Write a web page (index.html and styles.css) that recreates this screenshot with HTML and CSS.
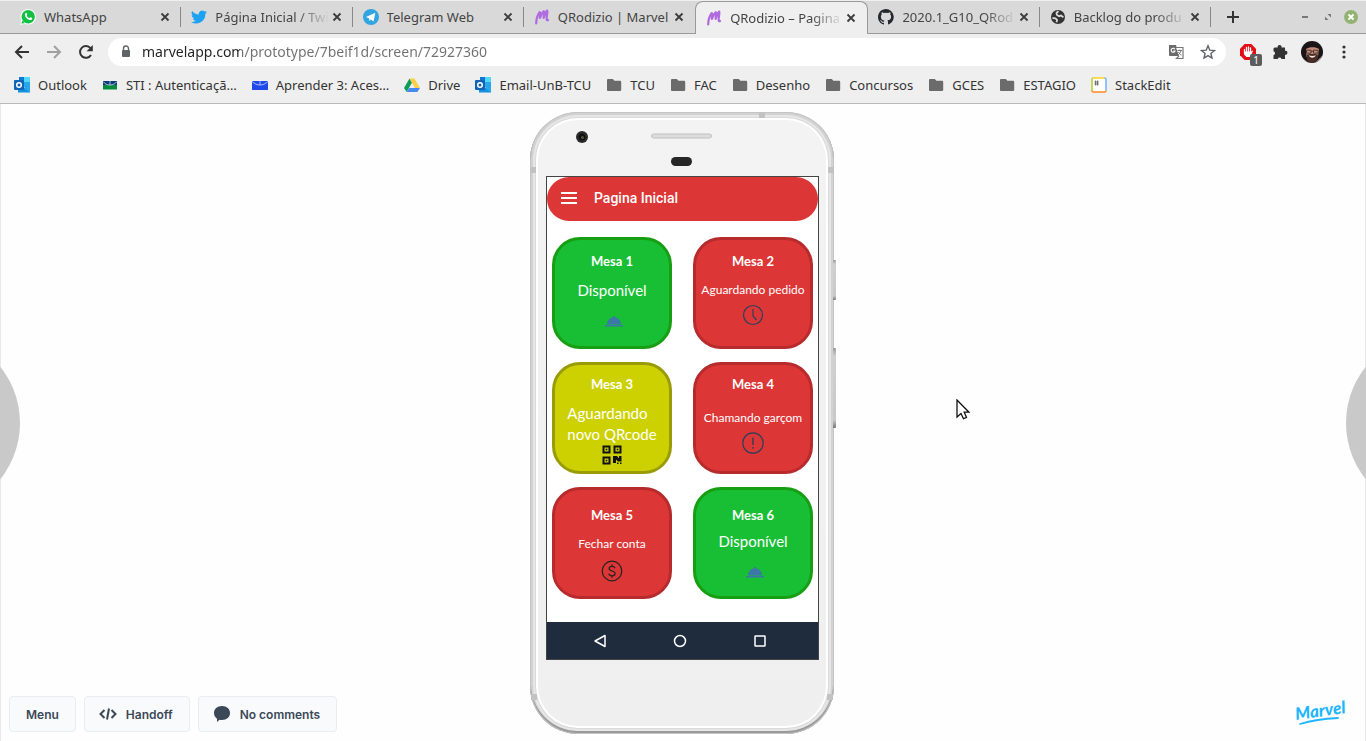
FILE: index.html
```html
<!DOCTYPE html>
<html lang="pt-BR">
<head>
<meta charset="utf-8">
<title>QRodizio – Pagina Inicial</title>
<link rel="stylesheet" href="styles.css">
</head>
<body>
<svg class="defs" aria-hidden="true">
  <symbol id="close" viewBox="0 0 16 16"><path d="M4.500 4.500l7 7M11.500 4.500l-7 7" stroke="#3c3c3c" stroke-width="1.800" fill="none"/></symbol>
  <symbol id="folder" viewBox="0 0 16 16"><path d="M2.200 2h4.600l1.600 1.800h5.400c.8 0 1.400.5 1.400 1.300v7.600c0 .8-.6 1.300-1.400 1.300H2.200c-.8 0-1.200-.5-1.200-1.300V3.300C1 2.500 1.500 2 2.200 2z" fill="#6b6b6b"/></symbol>
  <symbol id="marvel" viewBox="0 0 16 16"><path d="M2.200 14.500C2.200 10 3.500 6 5.500 3.300c1-.6.8 2.200.3 5.700C7 6 8.200 3.600 9.600 2.400c1-.3.4 3.200 0 6.400 1.200-3.200 2.200-5.800 3.600-7.300.8.400-.6 5.500-.6 8.500 0 1 .5 1.500 1.400 1" fill="none" stroke="#b06be0" stroke-width="2.200" stroke-linecap="round" stroke-linejoin="round"/></symbol>
  <symbol id="outlook" viewBox="0 0 16 16"><path d="M5 0h11v10H5z" fill="#28a8ea"/><path d="M5 0h5v5H5z" fill="#0f78d4"/><path d="M10 0h6v5h-6z" fill="#50d9ff"/><path d="M4 8l6 3 6-4v8.500H4z" fill="#1490df"/><path d="M10 11l6-4v8.500z" fill="#28a8ea"/><rect y="3" width="10" height="10" rx="1" fill="#0f64b5"/><circle cx="5" cy="8" r="2.300" fill="none" stroke="#fff" stroke-width="1.500"/></symbol>
  <symbol id="dish" viewBox="0 0 20 12"><path d="M3 9.500a7 7 0 0 1 6.200-7.200V1h1.600v1.300A7 7 0 0 1 17 9.500zM1 10h18v1.400H1z" fill="#3b78a8"/></symbol>
</svg>

<header class="chrome">
  <div class="tabstrip">
    <nav class="tabs" aria-label="Abas">
      <div class="tab">
        <svg class="icon" viewBox="0 0 16 16"><circle cx="8.200" cy="7.800" r="7.800" fill="#fff"/><path d="M.2 16l1.200-4.500 3.400 3.300z" fill="#fff"/><circle cx="8.200" cy="7.800" r="6.700" fill="#12c143"/><path d="M1.500 14.800l.8-3.300 2.400 2.400z" fill="#12c143"/><path d="M5.500 4.200c.5-.6 1-.4 1.200.1l.5 1.200c.1.400-.5.900-.5 1.200.7 1.300 1.600 2 2.700 2.400.4 0 .8-1 1.200-.9l1.400.7c.5.300.1 1.500-.5 1.900-1 .7-2.700.2-4.300-1C5.400 8.400 4.200 5.700 5.500 4.200z" fill="#fff"/></svg>
        <a class="tab-title" href="#">WhatsApp</a>
        <button class="close" aria-label="Fechar WhatsApp"><svg class="icon"><use href="#close"/></svg></button>
      </div>
      <div class="tab">
        <svg class="icon" viewBox="0 0 24 24"><path d="M24 4.600a10 10 0 0 1-2.800.8 5 5 0 0 0 2.100-2.700 10 10 0 0 1-3.100 1.200 4.900 4.900 0 0 0-8.400 4.500A14 14 0 0 1 1.700 3.100a4.900 4.900 0 0 0 1.500 6.600 5 5 0 0 1-2.200-.6 4.900 4.900 0 0 0 3.900 4.900 5 5 0 0 1-2.200.1 4.900 4.900 0 0 0 4.600 3.400A10 10 0 0 1 0 19.500a14 14 0 0 0 21.500-12.400A10 10 0 0 0 24 4.600z" fill="#1da1f2"/></svg>
        <a class="tab-title long" href="#">Página Inicial / Twi</a>
        <button class="close" aria-label="Fechar Twitter"><svg class="icon"><use href="#close"/></svg></button>
      </div>
      <div class="tab">
        <svg class="icon" viewBox="0 0 16 16"><circle cx="8" cy="8" r="8" fill="#31a5e0"/><path d="M3 8l9.300-4.200-1.800 8.800-2.600-2-1.400 1.500-.4-2.500z" fill="#fff"/></svg>
        <a class="tab-title" href="#">Telegram Web</a>
        <button class="close" aria-label="Fechar Telegram"><svg class="icon"><use href="#close"/></svg></button>
      </div>
      <div class="tab">
        <svg class="icon"><use href="#marvel"/></svg>
        <a class="tab-title" href="#">QRodizio | Marvel</a>
        <button class="close" aria-label="Fechar Marvel"><svg class="icon"><use href="#close"/></svg></button>
      </div>
      <div class="tab active">
        <svg class="icon"><use href="#marvel"/></svg>
        <a class="tab-title long" href="#">QRodizio – Pagina</a>
        <button class="close" aria-label="Fechar QRodizio"><svg class="icon"><use href="#close"/></svg></button>
      </div>
      <div class="tab">
        <svg class="icon" viewBox="0 0 16 16"><path fill="#24292e" d="M8 0C3.600 0 0 3.600 0 8c0 3.500 2.300 6.500 5.500 7.600.4.100.5-.2.500-.4v-1.400c-2.200.5-2.700-1-2.700-1-.4-.9-.9-1.200-.9-1.200-.7-.5.100-.5.100-.5.800.1 1.200.8 1.200.8.700 1.300 1.900.9 2.300.7.100-.5.300-.9.500-1.100-1.800-.2-3.600-.9-3.600-4 0-.9.300-1.600.8-2.100-.1-.2-.4-1 .1-2.100 0 0 .7-.2 2.200.8a7.700 7.700 0 0 1 4 0c1.500-1 2.200-.8 2.200-.8.400 1.100.2 1.900.1 2.100.5.600.8 1.300.8 2.100 0 3.100-1.900 3.700-3.700 3.900.3.300.6.800.6 1.500v2.200c0 .2.100.5.500.4A8 8 0 0 0 8 0z"/></svg>
        <a class="tab-title long" href="#">2020.1_G10_QRod</a>
        <button class="close" aria-label="Fechar GitHub"><svg class="icon"><use href="#close"/></svg></button>
      </div>
      <div class="tab">
        <svg class="icon" viewBox="0 0 16 16"><circle cx="8" cy="8" r="7" fill="#333"/><path d="M8.500 2.200l-2 1.600.3 2L9 7.200l2-.6 2.400 1.600M2.500 9l3 .3 1.600 1.700-.6 2.300" fill="none" stroke="#d9d9d9" stroke-width="1.800"/></svg>
        <a class="tab-title long" href="#">Backlog do produ</a>
        <button class="close" aria-label="Fechar Backlog"><svg class="icon"><use href="#close"/></svg></button>
      </div>
    </nav>
    <button class="new-tab" aria-label="Nova aba"><svg class="icon" viewBox="0 0 16 16"><path d="M8 2v12M2 8h12" stroke="#333" stroke-width="2"/></svg></button>
    <div class="window-buttons">
      <button aria-label="Minimizar"><svg class="icon" viewBox="0 0 16 16"><path d="M5 8h6" stroke="#777" stroke-width="2"/></svg></button>
      <button aria-label="Restaurar"><svg class="icon" viewBox="0 0 16 16"><path d="M7.500 5H11v3.500zM5 7.500V11h3.500z" fill="#777"/></svg></button>
      <button aria-label="Fechar janela"><svg class="icon" viewBox="0 0 16 16"><circle cx="8" cy="8" r="7" fill="#92b372"/><path d="M5.500 5.500l5 5M10.500 5.500l-5 5" stroke="#fff" stroke-width="2"/></svg></button>
    </div>
  </div>

  <div class="toolbar">
    <div class="nav-buttons">
      <button aria-label="Voltar"><svg class="icon" viewBox="0 0 16 16"><path d="M15 8H2M8 2L2 8l6 6" fill="none" stroke="#333" stroke-width="2"/></svg></button>
      <button aria-label="Avançar"><svg class="icon" viewBox="0 0 16 16"><path d="M1 8h13M8 2l6 6-6 6" fill="none" stroke="#a0a0a0" stroke-width="2"/></svg></button>
      <button aria-label="Recarregar"><svg class="icon" viewBox="0 0 16 16"><path d="M13 11A5.900 5.900 0 1 1 12.500 4.200" fill="none" stroke="#333" stroke-width="2"/><path d="M14.800 1v6.200H8.600z" fill="#333"/></svg></button>
    </div>
    <div class="omnibox">
      <svg class="icon" viewBox="0 0 16 16"><path d="M5.500 7V4.500a2.500 2.500 0 0 1 5 0V7" fill="none" stroke="#5f6368" stroke-width="1.400"/><rect x="4" y="6" width="8" height="7" rx="1" fill="#5f6368"/></svg>
      <input class="url" type="text" aria-label="Endereço" value="marvelapp.com/prototype/7beif1d/screen/72927360">
      <button aria-label="Traduzir"><svg class="icon" viewBox="0 0 16 16"><path d="M1 1h7l3 11H2a1 1 0 0 1-1-1z" fill="#6b6b6b"/><path d="M8 3.500h7v11H8.500l2.500-2.500" fill="#fff" stroke="#777" stroke-width="1.200"/><path d="M6.800 5.200A2 2 0 1 0 7 7H5.200" fill="none" stroke="#fff" stroke-width="1.100"/><path d="M9.500 6.500h4.500M11.700 5.500v1M13 6.500c-.4 2-1.600 3.500-3 4.300M10.500 8c.7 1.500 1.800 2.500 3 3" fill="none" stroke="#777"/></svg></button>
      <button aria-label="Favoritar"><svg class="icon" viewBox="0 0 16 16"><path d="M8 1.800l1.800 4.400 4.700.3-3.600 3 1.100 4.600L8 11.600l-4 2.500 1.100-4.600-3.600-3 4.700-.3z" fill="none" stroke="#5f6368" stroke-width="1.400"/></svg></button>
    </div>
    <div class="extensions">
      <button class="adblock" aria-label="Bloqueador"><svg class="icon" viewBox="0 0 16 16"><path d="M4.700 0h6.600L16 4.700v6.600L11.300 16H4.700L0 11.300V4.700z" fill="#e40d14"/><path d="M4.500 9V5.500M6.500 8V3.500M8.500 8V3M10.500 8V4" stroke="#fff" stroke-width="1.300" stroke-linecap="round"/><path d="M4 7.500h7.200l1.300-1 .5.600-2 4.400-1.500 1.500H6.500L4 10.500z" fill="#fff"/></svg><span class="badge">1</span></button>
      <button aria-label="Extensões"><svg class="icon" viewBox="0 0 16 16"><path d="M2.500 3.500h3.200a2 2 0 1 1 3.800 0H13v3.300a2 2 0 1 1 0 3.900V15H9.500a2 2 0 0 0-3.800 0H1.500v-3.800a2 2 0 0 0 0-3.900V4.500z" fill="#333"/></svg></button>
      <button class="profile" aria-label="Perfil"><svg class="avatar" viewBox="0 0 22 22"><clipPath id="face"><circle cx="11" cy="11" r="11"/></clipPath><g clip-path="url(#face)"><path d="M0 0h22v22H0z" fill="#1a1617"/><path d="M5 8c3-2.500 10-2.500 13 0l-1 7.500-3.500 5h-5l-3-5z" fill="#c08a74"/><path d="M5.500 14l3-1h6l3 1-2 6-4.500 2-4.500-2z" fill="#4a2d27"/><path d="M7.800 14.300c2 .8 5 .8 7 0-1 3.200-6 3.200-7 0z" fill="#f2e4df"/><path d="M5.500 9.200H10v3H5.500zM12.500 9.200H17v3h-4.500zM10 10.200h2.500" fill="none" stroke="#3a2a2a" stroke-width=".8"/><path d="M0 16l8 6H0z" fill="#96787a"/><path d="M22 14v8h-8z" fill="#b9a9a5"/></g></svg></button>
      <button aria-label="Menu do navegador"><svg class="icon" viewBox="0 0 16 16"><circle cx="8" cy="3" r="1.600" fill="#333"/><circle cx="8" cy="8" r="1.600" fill="#333"/><circle cx="8" cy="13" r="1.600" fill="#333"/></svg></button>
    </div>
  </div>

  <nav class="bookmarks" aria-label="Favoritos">
    <a href="#"><svg class="icon"><use href="#outlook"/></svg>Outlook</a>
    <a href="#"><svg class="icon" viewBox="0 0 16 16"><path d="M1 4h14v4H1z" fill="#0c3c7c"/><path d="M1 8h14v4.500H1z" fill="#068c3f"/><path d="M1 4.500C3 7 5 8 8 8s5-1 7-3.500M8 4v4" fill="none" stroke="#e8f0f0" stroke-width=".7"/></svg>STI : Autenticaçã…</a>
    <a href="#"><svg class="icon" viewBox="0 0 16 16"><path d="M0 4h16v9H0z" fill="#2148e8"/><path d="M0 4.500C3 7 5 8 8 8s5-1 8-3.500M8 4v4" fill="none" stroke="#dfe6ff" stroke-width=".7"/></svg>Aprender 3: Aces…</a>
    <a href="#"><svg class="icon" viewBox="0 0 16 16"><path d="M5.500 1.500L0 11l2.700 4L8 5.500z" fill="#0f9d58"/><path d="M5.500 1.500h5L16 11h-5z" fill="#ffcf48"/><path d="M5.300 11H16l-2.700 4H2.700z" fill="#4688f4"/></svg>Drive</a>
    <a href="#"><svg class="icon"><use href="#outlook"/></svg>Email-UnB-TCU</a>
    <a href="#"><svg class="icon"><use href="#folder"/></svg>TCU</a>
    <a href="#"><svg class="icon"><use href="#folder"/></svg>FAC</a>
    <a href="#"><svg class="icon"><use href="#folder"/></svg>Desenho</a>
    <a href="#"><svg class="icon"><use href="#folder"/></svg>Concursos</a>
    <a href="#"><svg class="icon"><use href="#folder"/></svg>GCES</a>
    <a href="#"><svg class="icon"><use href="#folder"/></svg>ESTAGIO</a>
    <a href="#"><svg class="icon" viewBox="0 0 16 16"><rect x="1" y="1" width="14" height="14" rx="2" fill="#fff"/><path d="M1 14V2.500Q1 1 2.500 1" fill="none" stroke="#b5d030" stroke-width="1.500"/><path d="M2.500 1H14" stroke="#ffd21a" stroke-width="1.500"/><path d="M13.500 1Q15 1 15 2.500V13.500" fill="none" stroke="#6cb2ff" stroke-width="1.500"/><path d="M1 13.500Q1 15 2.500 15h11q1.500 0 1.500-1.500" fill="none" stroke="#ff8a1e" stroke-width="1.500"/><path d="M4.600 3.500v5M6.600 3.500v5M3.500 5h4.300M3.500 7h4.300" stroke="#555" stroke-width=".8"/></svg>StackEdit</a>
  </nav>
</header>

<main class="stage">
  <button class="side-nav prev" aria-label="Tela anterior"></button>
  <button class="side-nav next" aria-label="Próxima tela"></button>

  <div class="actions">
    <button class="action">Menu</button>
    <button class="action"><svg class="action-icon" viewBox="0 0 18 16"><path d="M5.500 4L1.500 8l4 4M12.500 4l4 4-4 4M10 2.500L8 13.500" fill="none" stroke="#3c4858" stroke-width="2"/></svg>Handoff</button>
    <button class="action"><svg class="action-icon" viewBox="0 0 18 16"><path d="M9 0c4.800 0 8 3 8 7s-3.200 7-8 7c-.9 0-1.700-.1-2.500-.3L4 16v-3.300C2.200 11.400 1 9.400 1 7c0-4 3.200-7 8-7z" fill="#3c4858"/></svg>No comments</button>
  </div>

  <div class="device">
    <div class="phone">
      <svg class="sensors" viewBox="0 0 272 56"><circle cx="36" cy="17" r="6" fill="#2b2b2b"/><circle cx="36" cy="17" r="3.500" fill="#111"/><circle cx="36.500" cy="17.500" r="1.500" fill="#55573c"/><rect x="105.500" y="14" width="60" height="4" rx="2" fill="#dcdcdc" stroke="#c0c0c0"/><rect x="125" y="37" width="21" height="9" rx="4.500" fill="#262626"/></svg>
      <div class="screen">
        <header class="app-bar">
          <button aria-label="Abrir menu"><svg class="icon" viewBox="0 0 16 16"><path d="M0 3h16M0 8h16M0 13h16" stroke="#fff" stroke-width="1.800"/></svg></button>
          <h1>Pagina Inicial</h1>
        </header>
        <div class="tables">
          <button class="card free row-1"><span class="name">Mesa 1</span><span class="status large">Disponível</span><svg class="dish"><use href="#dish"/></svg></button>
          <button class="card busy row-1"><span class="name">Mesa 2</span><span class="status">Aguardando pedido</span><svg class="round" viewBox="0 0 22 22"><circle cx="11" cy="11" r="9.500" fill="none" stroke="#2d4059" stroke-width="1.200"/><path d="M11 5v7l3.500 4" fill="none" stroke="#2d4059" stroke-width="1.200"/></svg></button>
          <button class="card waiting row-2"><span class="name">Mesa 3</span><span class="status large">Aguardando<br>novo QRcode</span><svg class="qr" viewBox="0 0 20 20"><path d="M1.500 1.500h6v6h-6zM12.500 1.500h6v6h-6zM1.500 12.500h6v6h-6z" fill="none" stroke="#111" stroke-width="2"/><path d="M3.700 3.700h1.600v1.600H3.700zM14.700 3.700h1.600v1.600h-1.600zM3.700 14.700h1.600v1.600H3.700zM11 11h4l2 2.500V11h2.500v5.500H16L14 14.500V18h-3zM15 17.500h1.500V19H15zM18 17.500h1.500V19H18z" fill="#111"/></svg></button>
          <button class="card busy row-2 call"><span class="name">Mesa 4</span><span class="status">Chamando garçom</span><svg class="round" viewBox="0 0 22 22"><circle cx="11" cy="11" r="10.200" fill="none" stroke="#2d4059" stroke-width="1.200"/><path d="M11 5.500V13M11 15v1.800" stroke="#2d4059" stroke-width="1.400"/></svg></button>
          <button class="card busy row-3"><span class="name">Mesa 5</span><span class="status">Fechar conta</span><svg class="round" viewBox="0 0 22 22"><circle cx="11" cy="11" r="9.800" fill="none" stroke="#222" stroke-width="1.200"/><path d="M14 8.200C13.500 6.700 12.500 6.300 11 6.300c-1.700 0-2.900.8-2.900 2.200 0 3.200 6 1.700 6 5 0 1.500-1.300 2.300-3.100 2.300-1.700 0-2.800-.6-3.200-2.200M11 4.300v2M11 15.800v2" fill="none" stroke="#222" stroke-width="1.200"/></svg></button>
          <button class="card free row-3"><span class="name">Mesa 6</span><span class="status large">Disponível</span><svg class="dish"><use href="#dish"/></svg></button>
        </div>
        <nav class="system-bar" aria-label="Sistema">
          <button aria-label="Voltar"><svg class="icon" viewBox="0 0 16 16"><path d="M13 2.500v11L3 8z" fill="none" stroke="#fff" stroke-width="1.500" stroke-linejoin="round"/></svg></button>
          <button aria-label="Início"><svg class="icon" viewBox="0 0 16 16"><circle cx="8" cy="8" r="5.500" fill="none" stroke="#fff" stroke-width="1.500"/></svg></button>
          <button aria-label="Recentes"><svg class="icon" viewBox="0 0 16 16"><rect x="3" y="3" width="10" height="10" rx=".5" fill="none" stroke="#fff" stroke-width="1.500"/></svg></button>
        </nav>
      </div>
    </div>
    <span class="band top-band"></span>
    <span class="band left-upper"></span>
    <span class="band right-upper"></span>
    <span class="band left-lower"></span>
    <span class="band right-lower"></span>
    <span class="key power"></span>
    <span class="key volume"></span>
  </div>

  <a class="brand" href="#" aria-label="Marvel"><svg viewBox="0 0 52 28"><text class="brand-text" x="1" y="19" transform="rotate(-8 1 19)">Marvel</text><path d="M5 23C16 19.500 30 17.500 43 17" fill="none" stroke="#1fb6ff" stroke-width="1.800" stroke-linecap="round"/></svg></a>

  <svg class="pointer" viewBox="0 0 14 22"><path d="M1 1v17l4-3.500 2.500 5.200 3-1.200-2.300-5.300H13z" fill="#fff" stroke="#111" stroke-width="1.300"/></svg>
</main>
</body>
</html>
```
FILE: styles.css
```css
* {
  box-sizing: border-box;
}

body {
  margin: 0;
  height: 100vh;
  display: flex;
  flex-direction: column;
  overflow: hidden;
  background: #fefefe;
  color: #333;
  font-family: "Noto Sans", "Open Sans", sans-serif;
  font-size: 13px;
}

button {
  margin: 0;
  padding: 0;
  border: 0;
  background: none;
  color: inherit;
  font: inherit;
}

a {
  color: inherit;
  text-decoration: none;
}

.defs {
  position: absolute;
  width: 0;
  height: 0;
}

.icon {
  display: block;
  flex: none;
  width: 16px;
  height: 16px;
}

/* Browser chrome */
.chrome {
  flex: none;
  background: #efefef;
  border-bottom: 1px solid #b8b8b8;
}

.tabstrip {
  display: flex;
  height: 34px;
  padding: 0 0 1px 10px;
  background: #d9d9d9;
  border-top: 1px solid #efefef;
  box-shadow: inset 0 -1px #999;
}

.tabs {
  flex: 1;
  display: flex;
  min-width: 0;
}

.tab {
  flex: 1;
  display: flex;
  align-items: center;
  min-width: 0;
  padding: 0 8px 0 10px;
  background: linear-gradient(#888, #888) right center / 1px 20px no-repeat;
}

.tab:has(+ .active) {
  background: none;
}

.tab.active {
  margin-bottom: -1px;
  background: #efefef;
  border: 1px solid #999;
  border-bottom: 0;
  border-radius: 8px 8px 0 0;
}

.tab-title {
  flex: 1;
  margin-left: 8px;
  overflow: hidden;
  white-space: nowrap;
  color: #444;
}

.tab-title.long {
  -webkit-mask-image: linear-gradient(to right, #000 calc(100% - 32px), transparent);
  mask-image: linear-gradient(to right, #000 calc(100% - 32px), transparent);
}

.new-tab {
  padding: 0 14px;
}

.window-buttons {
  display: flex;
  gap: 7px;
  margin-left: 42px;
  padding-right: 7px;
}

.toolbar {
  display: flex;
  align-items: center;
  height: 36px;
  padding-right: 14px;
}

.nav-buttons {
  display: flex;
  gap: 16px;
  padding: 0 14px;
}

.omnibox {
  flex: 1;
  display: flex;
  align-items: center;
  height: 28px;
  padding: 0 10px;
  border-radius: 14px;
  background: #fff;
}

.omnibox button {
  margin-left: 16px;
}

.url {
  flex: 1;
  min-width: 0;
  margin-left: 8px;
  padding: 0 0 2px;
  border: 0;
  outline: 0;
  font: inherit;
  font-size: 14px;
  color: transparent;
  background: linear-gradient(to right, #222 98px, #707070 98px);
  -webkit-background-clip: text;
  background-clip: text;
}

.extensions {
  display: flex;
  align-items: center;
  gap: 16px;
  margin-left: 14px;
}

.profile {
  margin: 0 -3px;
}

.avatar {
  display: block;
  width: 22px;
  height: 22px;
}

.adblock {
  position: relative;
}

.badge {
  position: absolute;
  left: 10px;
  top: 10px;
  width: 12px;
  border-radius: 2px;
  background: #5c5c5c;
  color: #fff;
  font-size: 10px;
  line-height: 12px;
}

.bookmarks {
  display: flex;
  gap: 15px;
  height: 33px;
  padding: 0 14px 3px;
  white-space: nowrap;
}

.bookmarks a {
  display: flex;
  align-items: center;
  gap: 8px;
}

/* Prototype stage */
.stage {
  position: relative;
  flex: 1;
  display: grid;
  grid-template-columns: 1fr auto 1fr;
  align-items: end;
  min-height: 0;
  overflow: hidden;
  box-shadow: inset 1px 0 #e8e8e8, inset -1px 0 #e8e8e8;
}

.side-nav {
  position: absolute;
  top: 50%;
  width: 180px;
  height: 180px;
  margin-top: -90px;
  border-radius: 50%;
  background: #c9c9c9;
}

.prev {
  left: -160px;
}

.next {
  right: -160px;
}

.actions {
  display: flex;
  gap: 8px;
  padding: 0 9px 9px;
}

.action {
  display: flex;
  align-items: center;
  gap: 9px;
  height: 36px;
  padding: 0 16px;
  border: 1px solid #e9ecf0;
  border-radius: 4px;
  background: #f9fafc;
  color: #3c4858;
  font-family: Inter, Roboto, sans-serif;
  font-size: 12px;
  font-weight: 600;
  white-space: nowrap;
}

.action-icon {
  width: 18px;
  height: 16px;
}

.action:has(svg) {
  padding-left: 14px;
}

.brand {
  justify-self: end;
  width: 52px;
  margin: 0 19px 12px;
}

.brand svg {
  display: block;
  overflow: visible;
}

.brand-text {
  fill: #1fb6ff;
  font-family: Lato, sans-serif;
  font-size: 17px;
  font-style: italic;
  font-weight: 900;
}

.pointer {
  position: absolute;
  left: 70%;
  top: 295px;
  width: 14px;
  height: 22px;
}

/* Phone */
.device {
  position: relative;
  align-self: start;
  padding: 8px 2px 0 0;
}

.phone {
  width: 304px;
  padding: 8px 15px 74px 16px;
  border-radius: 48px;
  background: linear-gradient(#f3f3f3, #efefef);
  box-shadow:
    inset 0 0 0 1px #c4c4c4,
    inset 0 -2px 0 1px #999,
    inset 0 0 0 3px #d2d2d2,
    inset 0 0 0 5px #e6e6e6,
    inset 0 0 0 6px #dadada,
    inset 0 0 0 8px #fff;
}

.sensors {
  display: block;
  height: 56px;
}

.screen {
  border: 1px solid #444;
  background: #fff;
}

.app-bar {
  display: flex;
  align-items: center;
  gap: 17px;
  height: 44px;
  padding: 0 14px 3px;
  border-radius: 22px;
  background: #dd3636;
  color: #fff;
}

.app-bar h1 {
  margin: 0;
  font-family: Roboto, sans-serif;
  font-size: 14px;
  font-weight: 500;
}

.tables {
  display: grid;
  grid-template-columns: 1fr 1fr;
  gap: 13px 21px;
  padding: 16px 5px 23px;
}

.card {
  display: flex;
  flex-direction: column;
  align-items: center;
  height: 112px;
  border: 3px solid;
  border-radius: 28px;
  color: #fff;
  font-family: Lato, sans-serif;
  white-space: nowrap;
}

.free {
  background: #18bf35;
  border-color: #179e12;
}

.busy {
  background: #dd3636;
  border-color: #b72b2d;
}

.waiting {
  background: #cdd102;
  border-color: #999c06;
}

.row-1 {
  padding-top: 13px;
}

.row-2 {
  padding-top: 11px;
}

.row-3 {
  padding-top: 17px;
}

.name {
  font-size: 13px;
  font-weight: 700;
  line-height: 16px;
}

.status {
  margin-top: 11px;
  font-size: 12px;
  line-height: 20px;
}

.status.large {
  font-size: 15px;
  line-height: 21px;
  text-align: left;
}

.row-3 .large {
  margin-top: 8px;
}

.call .status {
  margin-top: 16px;
}

.dish {
  width: 20px;
  height: 12px;
  margin: 14px 0 0 4px;
}

.round {
  width: 22px;
  height: 22px;
  margin-top: 4px;
}

.row-3 .round {
  margin-top: 6px;
}

.qr {
  width: 20px;
  height: 20px;
}

.system-bar {
  display: flex;
  justify-content: center;
  gap: 64px;
  height: 37px;
  padding-right: 6px;
  background: #1e2c3d;
}

.band {
  position: absolute;
  width: 6px;
  height: 6px;
  background: #c2c2c2;
}

.top-band {
  left: 229px;
  top: 8px;
}

.left-upper {
  left: 0;
  top: 63px;
}

.right-upper {
  right: 2px;
  top: 63px;
}

.left-lower {
  left: 1px;
  bottom: 34px;
}

.right-lower {
  right: 3px;
  bottom: 34px;
}

.key {
  position: absolute;
  right: 0;
  width: 3px;
  border-radius: 0 1px 1px 0;
  background: linear-gradient(#999, #d0d0d0 10%, #c8c8c8 90%, #777);
}

.power {
  top: 156px;
  height: 40px;
}

.volume {
  top: 244px;
  height: 80px;
}
```
